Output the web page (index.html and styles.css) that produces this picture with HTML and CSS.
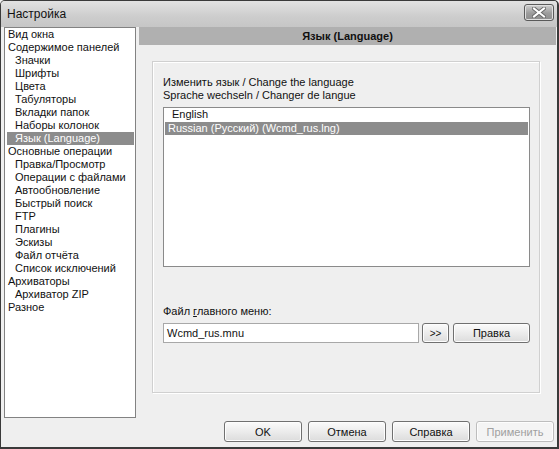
FILE: index.html
```html
<!DOCTYPE html>
<html lang="ru">
<head>
<meta charset="utf-8">
<title>Настройка</title>
<link rel="stylesheet" href="styles.css">
</head>
<body>
<div class="window">
  <div class="titlebar">
    <span class="title">Настройка</span>
    <div class="close">
      <svg width="14" height="11" viewBox="0 0 14 11">
        <path d="M2 1.5 L12 9.5 M12 1.5 L2 9.5" stroke="#6a6a6a" stroke-width="4" stroke-linecap="square"/>
        <path d="M2 1.5 L12 9.5 M12 1.5 L2 9.5" stroke="#ffffff" stroke-width="2" stroke-linecap="square"/>
      </svg>
    </div>
  </div>
  <div class="main">
    <ul class="tree">
      <li class="node">Вид окна</li>
      <li class="node">Содержимое панелей</li>
      <li class="node child">Значки</li>
      <li class="node child">Шрифты</li>
      <li class="node child">Цвета</li>
      <li class="node child">Табуляторы</li>
      <li class="node child">Вкладки папок</li>
      <li class="node child">Наборы колонок</li>
      <li class="node child selected">Язык (Language)</li>
      <li class="node">Основные операции</li>
      <li class="node child">Правка/Просмотр</li>
      <li class="node child">Операции с файлами</li>
      <li class="node child">Автообновление</li>
      <li class="node child">Быстрый поиск</li>
      <li class="node child">FTP</li>
      <li class="node child">Плагины</li>
      <li class="node child">Эскизы</li>
      <li class="node child">Файл отчёта</li>
      <li class="node child">Список исключений</li>
      <li class="node">Архиваторы</li>
      <li class="node child">Архиватор ZIP</li>
      <li class="node">Разное</li>
    </ul>
    <div class="pane">
      <div class="pane-header">Язык (Language)</div>
      <div class="group">
        <div class="label">Изменить язык / Change the language<br>Sprache wechseln / Changer de langue</div>
        <div class="listbox">
          <div class="item first">English</div>
          <div class="item selected">Russian (Русский) (Wcmd_rus.lng)</div>
        </div>
        <div class="label menu-label">Файл <u>г</u>лавного меню:</div>
        <div class="file-row">
          <div class="input">Wcmd_rus.mnu</div>
          <div class="btn btn-browse">&gt;&gt;</div>
          <div class="btn btn-edit">Правка</div>
        </div>
      </div>
    </div>
  </div>
  <div class="footer">
    <div class="btn btn-main">OK</div>
    <div class="btn btn-main">Отмена</div>
    <div class="btn btn-main">Справка</div>
    <div class="btn btn-main disabled">Применить</div>
  </div>
</div>
</body>
</html>
```

FILE: styles.css
```css
html, body {
  margin: 0;
  padding: 0;
  background: #f0f0f0;
}
body {
  font-family: "Liberation Sans", Arial, sans-serif;
  font-size: 11px;
  color: #111;
}
.window {
  width: 559px;
  height: 449px;
  box-sizing: border-box;
  border-style: solid;
  border-color: #3a3a3a;
  border-width: 1px 2px 2px 1px;
  border-radius: 5px 5px 0 0;
  background: #efefef;
  display: flex;
  flex-direction: column;
  overflow: hidden;
}
.titlebar {
  height: 26px;
  flex: none;
  display: flex;
  align-items: flex-start;
  justify-content: space-between;
  padding: 0 3px 0 6px;
  background: linear-gradient(#e2e2e2, #cdcdcd 60%, #c6c6c6);
}
.title {
  font-size: 12px;
  line-height: 26px;
}
.close {
  width: 30px;
  height: 17px;
  box-sizing: border-box;
  border: 1px solid #5a5a5a;
  border-radius: 3px;
  background: linear-gradient(#d0d0d0, #9c9c9c 55%, #8e8e8e);
  box-shadow: inset 0 0 0 1px #e0e0e0;
  display: flex;
  align-items: center;
  justify-content: center;
  margin-top: 3px;
}
.main {
  display: flex;
  gap: 3px;
  padding-left: 3px;
  padding-right: 1px;
  height: 391px;
  flex: none;
}
.tree {
  list-style: none;
  margin: 0;
  padding: 0;
  width: 132px;
  height: 391px;
  box-sizing: border-box;
  border: 1px solid #828282;
  background: #fff;
}
.node {
  height: 13px;
  line-height: 13px;
  padding-left: 3px;
  white-space: nowrap;
}
.node.child {
  padding-left: 10px;
}
.node.selected {
  background: #8c8c8c;
  color: #fff;
  margin: 0 1px 0 2px;
  padding-left: 8px;
}
.pane {
  flex: 1;
  display: flex;
  flex-direction: column;
}
.pane-header {
  height: 18px;
  line-height: 18px;
  background: #b0b0b0;
  font-weight: bold;
  text-align: center;
  font-size: 11px;
}
.group {
  margin: 16px 16px 0 13px;
  height: 332px;
  box-sizing: border-box;
  border: 1px solid #d0d0d0;
  box-shadow: inset 1px 1px 0 #fff, 1px 1px 0 #fff;
  padding: 14px 9px 0 10px;
}
.label {
  line-height: 13px;
}
.listbox {
  margin-top: 5px;
  height: 160px;
  box-sizing: border-box;
  border: 1px solid #8a8a8a;
  background: #fff;
  padding: 0 1px;
}
.item {
  height: 13px;
  line-height: 13px;
  padding-left: 3px;
  white-space: nowrap;
}
.item.first {
  padding-left: 7px;
  height: 14px;
}
.item.selected {
  background: #8c8c8c;
  color: #fff;
}
.menu-label {
  margin-top: 38px;
}
.file-row {
  display: flex;
  margin-top: 5px;
  height: 20px;
}
.input {
  width: 256px;
  height: 20px;
  box-sizing: border-box;
  border: 1px solid #a8a8a8;
  background: #fff;
  line-height: 18px;
  padding-left: 3px;
}
.btn {
  box-sizing: border-box;
  border: 1px solid #707070;
  border-radius: 3px;
  background: linear-gradient(#fbfbfb, #ececec 50%, #dcdcdc);
  box-shadow: inset 0 0 0 1px #fdfdfd;
  text-align: center;
  display: flex;
  align-items: center;
  justify-content: center;
}
.btn-browse {
  width: 27px;
  height: 20px;
  margin-left: 3px;
  font-size: 10px;
}
.btn-edit {
  width: 77px;
  height: 20px;
  margin-left: 4px;
}
.footer {
  display: flex;
  justify-content: flex-end;
  gap: 6px;
  padding: 3px 3px 0 0;
}
.btn-main {
  width: 78px;
  height: 21px;
}
.btn-main.disabled {
  color: #a0a0a0;
  border-color: #bdbdbd;
  background: #f4f4f4;
}
```
